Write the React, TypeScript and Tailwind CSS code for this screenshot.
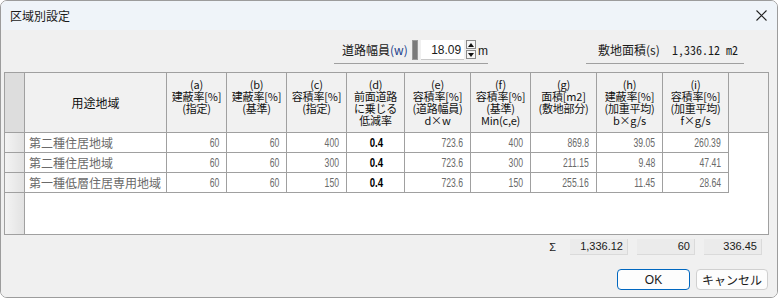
import React from "react";

const cols =
  "grid grid-cols-[20px_142px_60px_60px_60px_58px_66px_60px_66px_66px_66px_1fr]";

const headers: string[][] = [
  ["(a)", "建蔽率[%]", "(指定)"],
  ["(b)", "建蔽率[%]", "(基準)"],
  ["(c)", "容積率[%]", "(指定)"],
  ["(d)", "前面道路", "に乗じる", "低減率"],
  ["(e)", "容積率[%]", "(道路幅員)", "d×w"],
  ["(f)", "容積率[%]", "(基準)", "Min(c,e)"],
  ["(g)", "面積[m2]", "(敷地部分)"],
  ["(h)", "建蔽率[%]", "(加重平均)", "b×g/s"],
  ["(i)", "容積率[%]", "(加重平均)", "f×g/s"],
];

const rows = [
  ["第二種住居地域", "60", "60", "400", "0.4", "723.6", "400", "869.8", "39.05", "260.39"],
  ["第二種住居地域", "60", "60", "300", "0.4", "723.6", "300", "211.15", "9.48", "47.41"],
  ["第一種低層住居専用地域", "60", "60", "150", "0.4", "723.6", "150", "255.16", "11.45", "28.64"],
];

const jp = "font-['Noto_Sans_CJK_JP',sans-serif]";

function Num({ v }: { v: string }) {
  return (
    <span className="inline-block origin-right scale-x-[0.72] font-['Liberation_Sans',sans-serif] text-[12px]">
      {v}
    </span>
  );
}

export default function App() {
  return (
    <div className="w-[778px] h-[299px] bg-white">
      <div className="w-[778px] h-[298px] border border-[#9c9c9c] rounded-[7px] overflow-hidden flex flex-col">
        {/* title bar */}
        <div className={`h-[29px] bg-[#eff4f9] flex items-center justify-between pl-[9px] pr-[9px] ${jp} text-[12px] text-[#1a1a1a]`}>
          <span>区域別設定</span>
          <svg width="11" height="11" viewBox="0 0 11 11" className="mr-[1px]">
            <path d="M0.5 0.5L10.5 10.5M10.5 0.5L0.5 10.5" stroke="#222" strokeWidth="1.1" />
          </svg>
        </div>
        {/* body */}
        <div className="flex-1 bg-[#f0f0f0] px-[3px] flex flex-col">
          {/* top fields */}
          <div className="h-[42px] pt-[9px] flex items-start">
            <div className="ml-[330px] w-[154px] h-[25px] border-b border-[#a0a0a0] flex items-start pt-[1px] pl-[8px]">
              <span className={`${jp} text-[12px] leading-[19px] text-[#1a1a1a] w-[71px]`}>
                道路幅員<span className="text-[#22408a]">(w)</span>
              </span>
              <div className="w-[6px] h-[20px] bg-[#7b7b7b] border border-[#9a9a9a]" />
              <div className="ml-[3px] w-[44px] h-[20px] bg-white border-b border-[#c8c8c8] flex items-center justify-end pr-[3px] font-['Liberation_Sans',sans-serif] text-[12px] text-[#1a1a1a]">
                18.09
              </div>
              <div className="ml-[2px] w-[10px] h-[20px] flex flex-col gap-[1px]">
                <div className="h-[9px] bg-[#f6f6f6] border border-[#8a8a8a] flex items-center justify-center">
                  <svg width="6" height="4" viewBox="0 0 6 4"><path d="M3 0L6 4H0Z" fill="#111" /></svg>
                </div>
                <div className="h-[9px] bg-[#f6f6f6] border border-[#8a8a8a] flex items-center justify-center">
                  <svg width="6" height="4" viewBox="0 0 6 4"><path d="M0 0H6L3 4Z" fill="#111" /></svg>
                </div>
              </div>
              <span className="ml-[2px] font-['Liberation_Sans',sans-serif] text-[12px] leading-[22px] text-[#1a1a1a]">m</span>
            </div>
            <div className="ml-[98px] w-[158px] h-[25px] border-b border-[#a0a0a0] flex items-start pt-[1px] pl-[12px]">
              <span className={`${jp} text-[12px] leading-[19px] text-[#1a1a1a] w-[74px]`}>敷地面積(s)</span>
              <span className="font-['Noto_Sans_Mono_CJK_JP','Liberation_Mono',monospace] text-[12px] leading-[19px] text-[#1a1a1a] whitespace-pre">
                1,336.12 m2
              </span>
            </div>
          </div>
          {/* table */}
          <div className={`w-[765px] h-[163px] border border-[#a0a0a0] bg-white flex flex-col ${jp} text-[12px]`}>
            <div className={`${cols} h-[60px] bg-[#f1f1f1] border-b border-[#a0a0a0] text-[#111]`}>
              <div className="bg-[#dddddd] border-r border-[#a0a0a0]" />
              <div className="border-r border-[#a0a0a0] flex items-center justify-center">用途地域</div>
              {headers.map((h, i) => (
                <div key={i} className="border-r border-[#a0a0a0] flex flex-col items-center pt-[5px] text-[11px] leading-[12px] tracking-[-0.2px] whitespace-nowrap">
                  {h.map((l, j) => (
                    <span key={j} className="block h-[12px]">{l}</span>
                  ))}
                </div>
              ))}
              <div />
            </div>
            {rows.map((r, i) => (
              <div key={i} className={`${cols} h-[20px]`}>
                <div className="bg-gradient-to-r from-[#f4f4f4] to-[#e2e2e2] border-r border-b border-[#a0a0a0]" />
                <div className="border-r border-b border-[#a0a0a0] pl-[4px] leading-[19px] text-[#6a6a6a] whitespace-nowrap">
                  {r[0]}
                </div>
                {r.slice(1).map((v, j) =>
                  j === 3 ? (
                    <div key={j} className="border-r border-b border-[#a0a0a0] flex items-center justify-center text-[#000] pl-[2px]">
                      <span className="inline-block scale-x-[0.8] font-['Liberation_Sans',sans-serif] text-[12px] font-bold">{v}</span>
                    </div>
                  ) : (
                    <div key={j} className="border-r border-b border-[#a0a0a0] flex items-center justify-end pr-[7px] text-[#6a6a6a]">
                      <Num v={v} />
                    </div>
                  )
                )}
                <div />
              </div>
            ))}
            <div className="flex-1 flex">
              <div className="w-[20px] bg-gradient-to-r from-[#f4f4f4] to-[#e2e2e2] border-r border-[#a0a0a0]" />
              <div className="flex-1" />
            </div>
          </div>
          {/* sigma row */}
          <div className="mt-[4px] h-[16px] flex items-center justify-end pr-[12px] font-['Liberation_Sans',sans-serif] text-[11px] text-[#1a1a1a]">
            <span className="mr-[14px]">Σ</span>
            {["1,336.12", "60", "336.45"].map((v, i) => (
              <div
                key={v}
                className={`w-[58px] h-[16px] bg-[#ebebeb] border-b border-r border-[#dadada] flex items-center justify-end pr-[4px] ${i > 0 ? "ml-[9px]" : ""}`}
              >
                {v}
              </div>
            ))}
          </div>
          {/* buttons */}
          <div className="mt-[14px] flex justify-end pr-[6px]">
            <button className="w-[73px] h-[21px] rounded-[4px] border border-[#0067c0] bg-[#fdfdfd] font-['Liberation_Sans',sans-serif] text-[12px] text-[#1a1a1a]">
              OK
            </button>
            <button className={`ml-[6px] w-[72px] h-[21px] rounded-[4px] border border-[#d0d0d0] bg-[#fdfdfd] ${jp} text-[12px] text-[#1a1a1a]`}>
              キャンセル
            </button>
          </div>
        </div>
      </div>
    </div>
  );
}
